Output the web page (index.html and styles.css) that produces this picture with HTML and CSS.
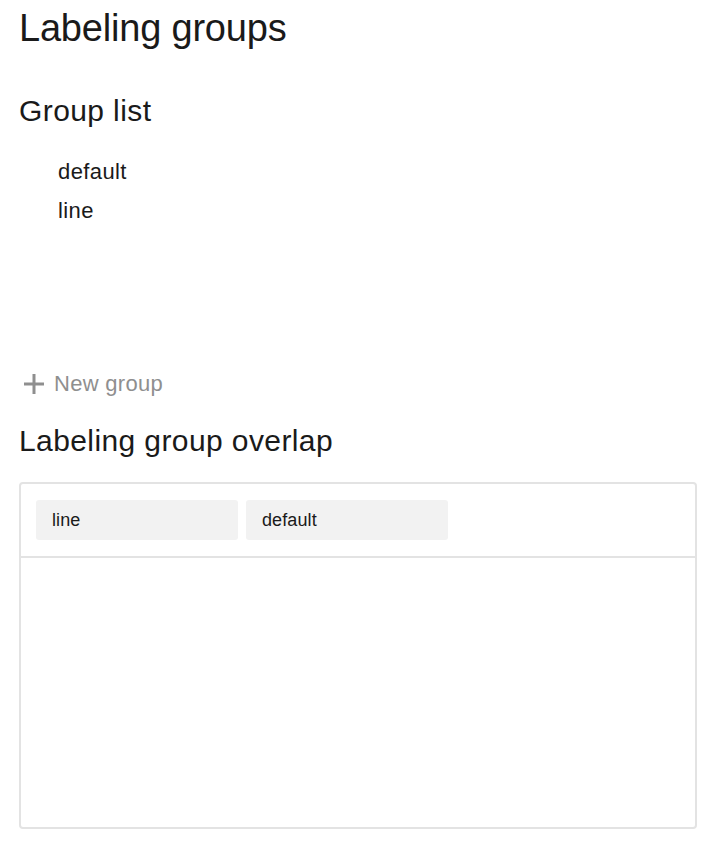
FILE: index.html
```html
<!DOCTYPE html>
<html>
<head>
<meta charset="utf-8">
<link rel="stylesheet" href="styles.css">
</head>
<body>
<div class="page">
  <h1 class="title">Labeling groups</h1>
  <h2 class="subtitle">Group list</h2>
  <ul class="group-list">
    <li>default</li>
    <li>line</li>
  </ul>
  <button class="new-group">
    <svg class="plus" width="20" height="20" viewBox="0 0 20 20"><path d="M10 0v20M0 10h20" stroke="#8f8f8f" stroke-width="3"/></svg>
    <span>New group</span>
  </button>
  <h2 class="subtitle overlap-title">Labeling group overlap</h2>
  <div class="overlap">
    <div class="overlap-head">
      <div class="chip">line</div>
      <div class="chip">default</div>
    </div>
    <div class="overlap-body"></div>
  </div>
</div>
</body>
</html>
```
FILE: styles.css
```css
html, body { margin: 0; padding: 0; background: #fff; }
body { font-family: "Liberation Sans", Arial, sans-serif; color: #1a1a1a; }
.page { padding: 0 21px 0 19px; }
.title { margin: 0; padding-top: 8px; font-size: 38px; font-weight: 400; line-height: 40px; letter-spacing: -0.2px; }
.subtitle { margin: 0; font-size: 30px; font-weight: 400; line-height: 34px; letter-spacing: 0.4px; }
.title + .subtitle { margin-top: 46px; }
.group-list { list-style: none; margin: 24px 0 0; padding: 0 0 0 39px; font-size: 22px; line-height: 39px; letter-spacing: 0.4px; }
.new-group { display: flex; align-items: center; gap: 10px; margin: 139px 0 0 5px; padding: 0; border: 0; background: none; font-family: inherit; font-size: 22px; letter-spacing: 0.3px; color: #8f8f8f; line-height: 30px; }
.overlap-title { margin-top: 25px; }
.overlap { margin-top: 24px; border: 2px solid #e3e3e3; border-radius: 4px; height: 347px; box-sizing: border-box; display: flex; flex-direction: column; }
.overlap-head { display: flex; gap: 8px; padding: 16px 15px 16px; border-bottom: 2px solid #e3e3e3; }
.chip { width: 202px; height: 40px; box-sizing: border-box; padding-left: 16px; display: flex; align-items: center; background: #f2f2f2; border-radius: 3px; font-size: 18px; letter-spacing: 0.1px; color: #1a1a1a; }
.overlap-body { flex: 1; }
```
